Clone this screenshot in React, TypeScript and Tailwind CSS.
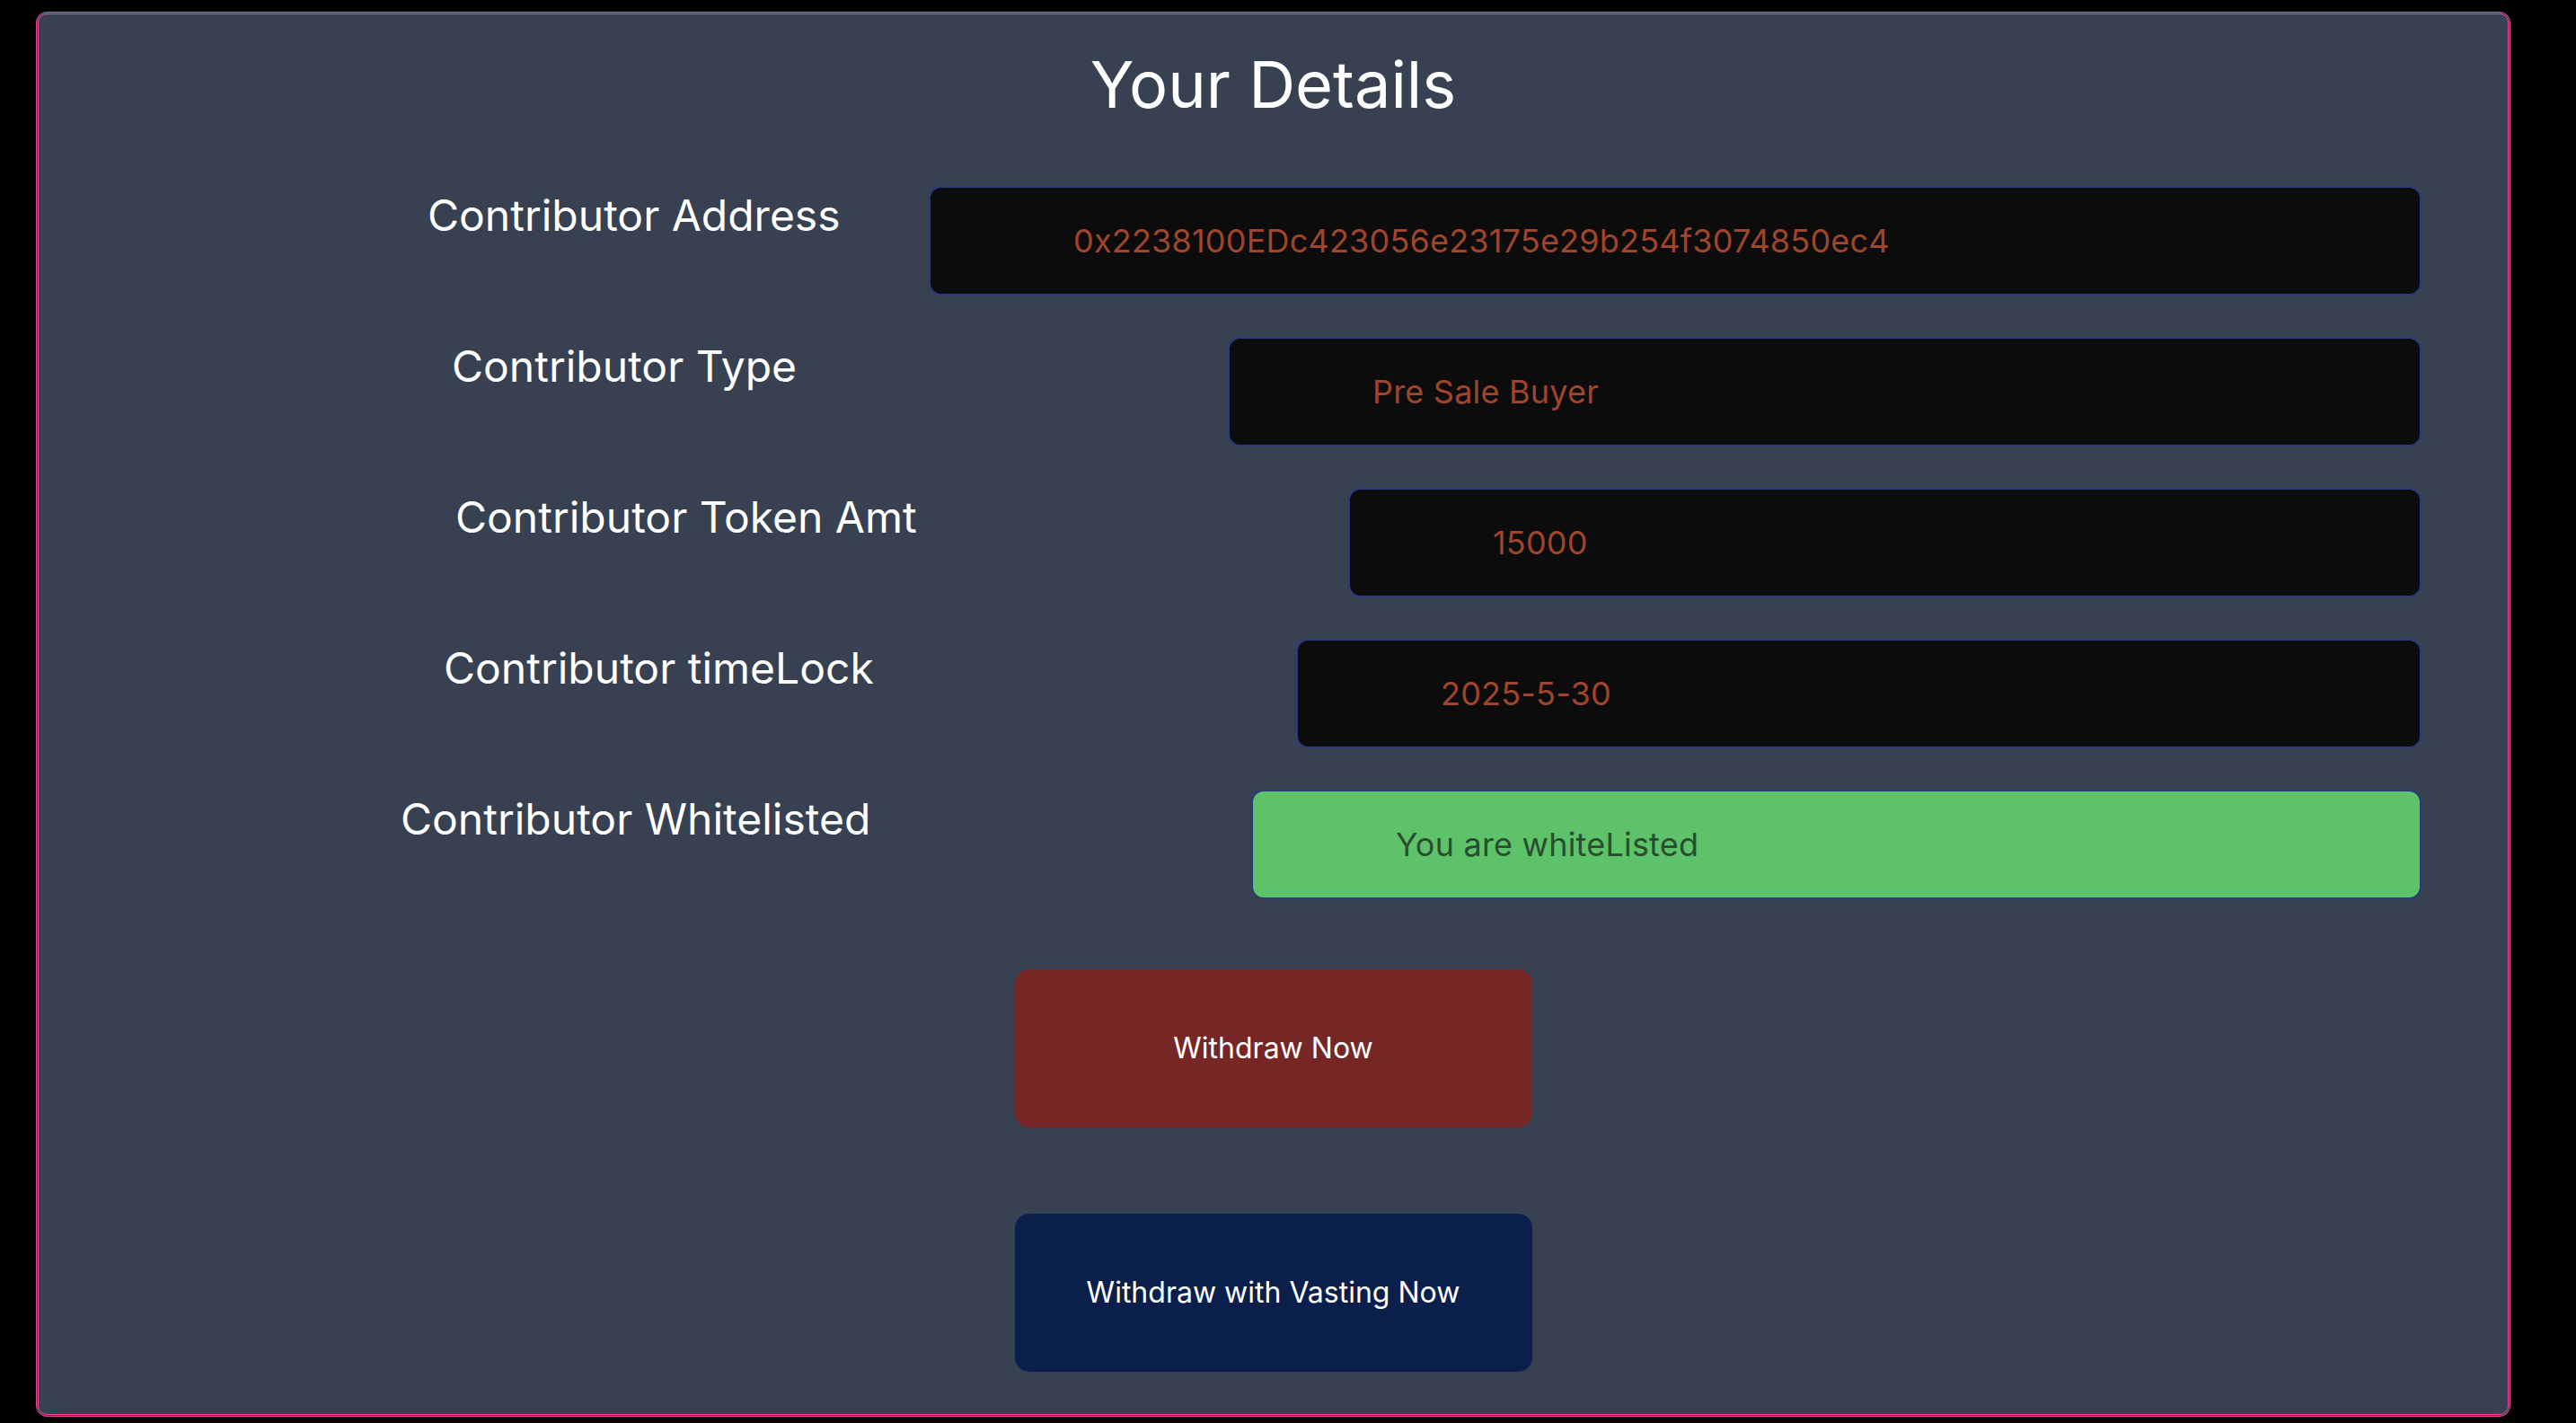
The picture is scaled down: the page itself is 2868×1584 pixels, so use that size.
const rows = [
  { label: "Contributor Address", value: "0x2238100EDc423056e23175e29b254f3074850ec4", labelPad: "pl-[433px]", boxWidth: "w-[1662px]", ok: false },
  { label: "Contributor Type", value: "Pre Sale Buyer", labelPad: "pl-[460px]", boxWidth: "w-[1329px]", ok: false },
  { label: "Contributor Token Amt", value: "15000", labelPad: "pl-[464px]", boxWidth: "w-[1195px]", ok: false },
  { label: "Contributor timeLock", value: "2025-5-30", labelPad: "pl-[451px]", boxWidth: "w-[1253px]", ok: false },
  { label: "Contributor Whitelisted", value: "You are whiteListed", labelPad: "pl-[403px]", boxWidth: "w-[1303px]", ok: true },
];

const App = () => {
  return (
    <div className="min-h-screen bg-black pt-[13px] pl-[40px] pr-[73px] pb-[6px] font-['Inter',sans-serif]">
      <div className="rounded-xl border-[3px] border-double border-[#ec4899] bg-[#374151] pt-[42px] pb-[47px]">
        <h1 className="text-center text-[72px] leading-none font-normal text-white">Your Details</h1>

        <div className="mt-[77px] flex flex-col gap-[46px]">
          {rows.map((row) => (
            <div key={row.label} className="flex items-start h-[122px]">
              <div className={`${row.labelPad} mt-[9px] text-[48px] leading-none text-white whitespace-nowrap`}>
                {row.label}
              </div>
              <div
                className={`${row.boxWidth} ml-auto mr-[96px] h-[122px] flex items-center pl-[159px] rounded-[14px] border-2 border-[#2a3a7c] text-[36px] tracking-[0.2px] ${
                  row.ok ? "bg-[#5ec26a] text-[#2b4d2f]" : "bg-[#0c0c0c] text-[#a0442c]"
                }`}
              >
                {row.value}
              </div>
            </div>
          ))}
        </div>

        <div className="mt-[78px] flex flex-col items-center gap-[96px]">
          <button className="w-[576px] h-[176px] rounded-2xl bg-[#772626] text-[32px] text-white">
            Withdraw Now
          </button>
          <button className="w-[576px] h-[176px] rounded-2xl bg-[#0a1f4c] text-[32px] text-white">
            Withdraw with Vasting Now
          </button>
        </div>
      </div>
    </div>
  );
};

export default App;
